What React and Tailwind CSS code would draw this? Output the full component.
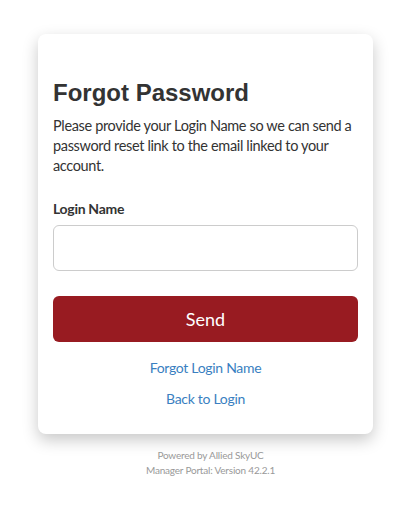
export default function App() {
  const sans = { fontFamily: '"Lato", "Noto Sans", sans-serif' };
  return (
    <div className="min-h-[512px] w-[407px] bg-white flex flex-col items-start pl-[38px] pt-[34px]" style={sans}>
      <div className="w-[335px] bg-white rounded-[8px] shadow-[0_6px_16px_rgba(0,0,0,0.22)] px-[15px] pt-[45px] pb-[25px] flex flex-col">
        <h1 className="text-[24px] leading-[28px] font-bold text-[#333]" style={{ fontFamily: '"Liberation Sans", Arial, sans-serif' }}>
          Forgot Password
        </h1>
        <p className="mt-[9px] text-[14.5px] leading-[20px] tracking-[-0.35px] text-[#333]">
          Please provide your Login Name so we can send a password reset link to the email linked to your account.
        </p>
        <label className="mt-[24px] text-[14px] leading-[18px] font-bold tracking-[-0.3px] text-[#333]">Login Name</label>
        <input className="mt-[7px] h-[46px] w-full rounded-[6px] border border-[#ccc] bg-white px-3 outline-none" />
        <button className="mt-[25px] h-[46px] w-full rounded-[6px] bg-[#981b21] text-white text-[18px]">Send</button>
        <a className="mt-[16px] text-center text-[14px] leading-[20px] tracking-[-0.3px] text-[#3a7fc1]">Forgot Login Name</a>
        <a className="mt-[11px] text-center text-[14px] leading-[20px] tracking-[-0.3px] text-[#3a7fc1]">Back to Login</a>
      </div>
      <div className="w-[335px] ml-[5px] mt-[14px] text-center text-[10px] leading-[15px] tracking-[-0.2px] text-[#999]">
        <div>Powered by Allied SkyUC</div>
        <div>Manager Portal: Version 42.2.1</div>
      </div>
    </div>
  );
}
